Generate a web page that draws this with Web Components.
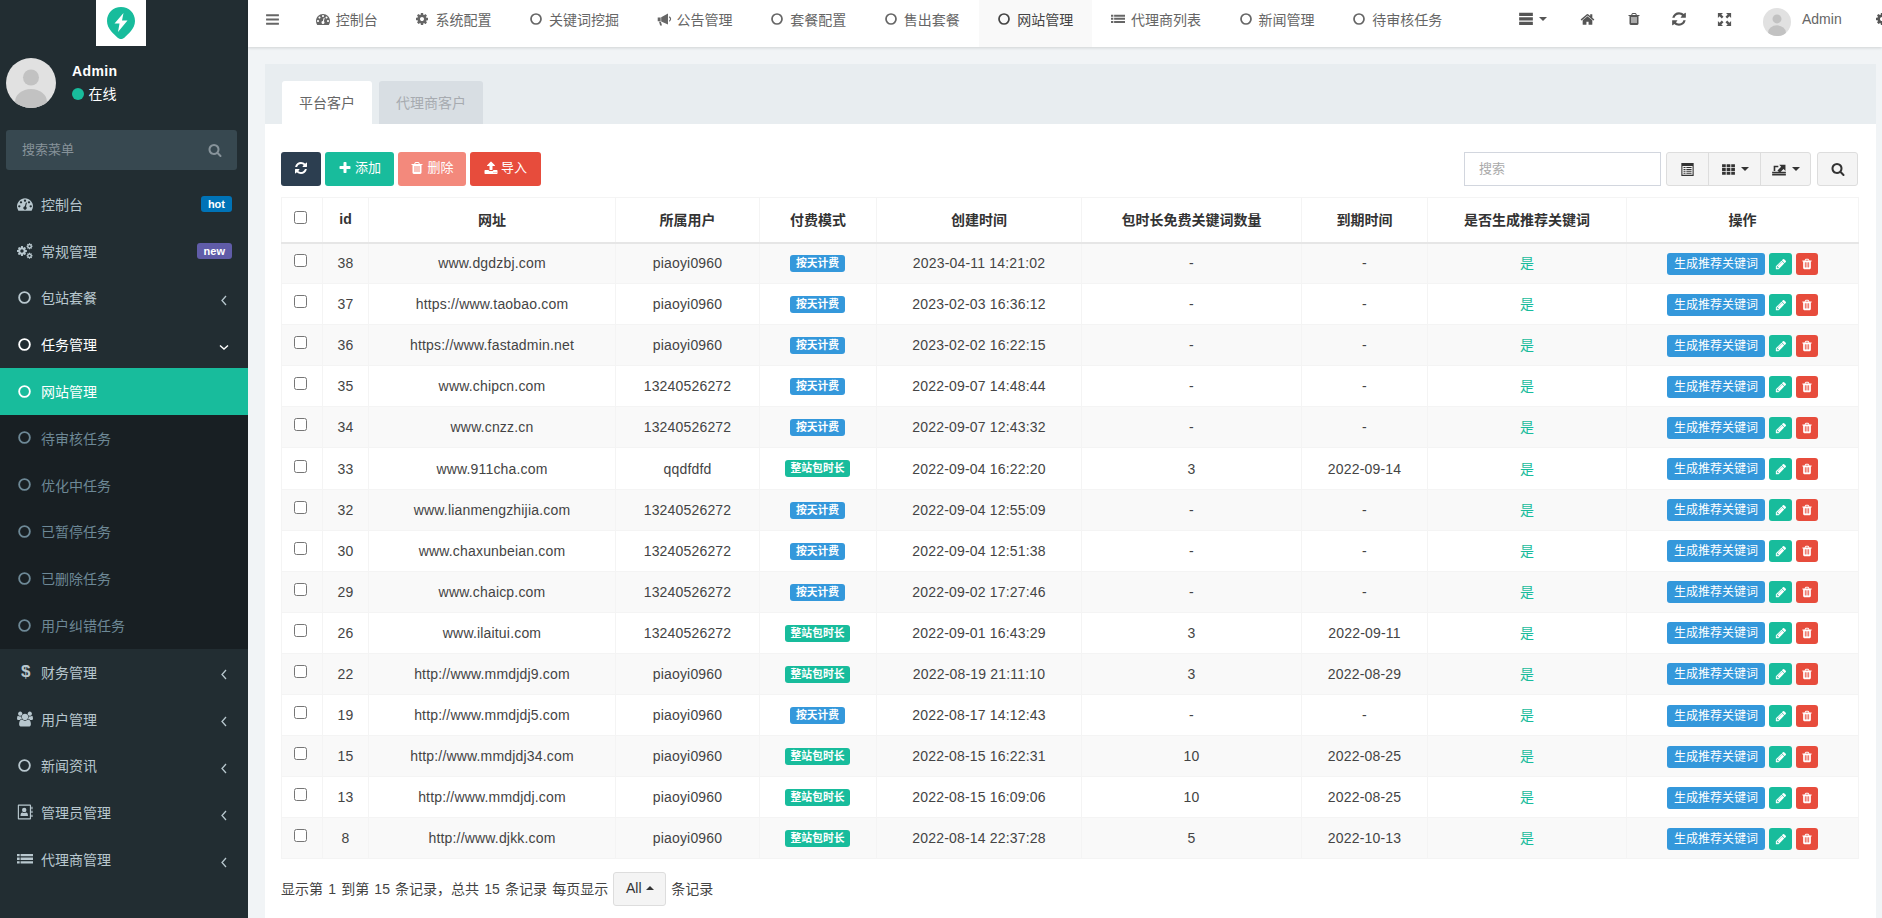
<!DOCTYPE html>
<html lang="zh">
<head>
<meta charset="utf-8">
<title>网站管理</title>
<style>
  html, body { margin: 0; height: 100%; overflow: hidden; }
  body { font: 14px "Liberation Sans", "Noto Sans CJK SC", sans-serif; color: #444; background: #f1f4f6; }
</style>
</head>
<body>
<admin-shell>
  <admin-sidebar slot="side">
    <side-item icon="dashboard" badge="hot" badge-color="#0073b7">控制台</side-item>
    <side-item icon="cogs" badge="new" badge-color="#605ca8">常规管理</side-item>
    <side-item icon="circle" arrow="left">包站套餐</side-item>
    <side-item icon="circle" arrow="down" open>任务管理</side-item>
    <side-sub>
      <side-item icon="circle" sub active>网站管理</side-item>
      <side-item icon="circle" sub>待审核任务</side-item>
      <side-item icon="circle" sub>优化中任务</side-item>
      <side-item icon="circle" sub>已暂停任务</side-item>
      <side-item icon="circle" sub>已删除任务</side-item>
      <side-item icon="circle" sub>用户纠错任务</side-item>
    </side-sub>
    <side-item icon="dollar" arrow="left">财务管理</side-item>
    <side-item icon="users" arrow="left">用户管理</side-item>
    <side-item icon="circle" arrow="left">新闻资讯</side-item>
    <side-item icon="contact" arrow="left">管理员管理</side-item>
    <side-item icon="list" arrow="left">代理商管理</side-item>
  </admin-sidebar>
  <top-bar slot="top">
    <top-item icon="dashboard">控制台</top-item>
    <top-item icon="cog">系统配置</top-item>
    <top-item icon="circle">关键词挖掘</top-item>
    <top-item icon="bullhorn" size="16">公告管理</top-item>
    <top-item icon="circle">套餐配置</top-item>
    <top-item icon="circle">售出套餐</top-item>
    <top-item icon="circle" active>网站管理</top-item>
    <top-item icon="list">代理商列表</top-item>
    <top-item icon="circle">新闻管理</top-item>
    <top-item icon="circle">待审核任务</top-item>
  </top-bar>
  <tab-panel>
    <tool-bar></tool-bar>
    <customer-table></customer-table>
    <table-footer></table-footer>
  </tab-panel>
</admin-shell>

<script>
const ICONS = {
  bars: "M1664 1344v128q0 26-19 45t-45 19H192q-26 0-45-19t-19-45v-128q0-26 19-45t45-19h1408q26 0 45 19t19 45zm0-512v128q0 26-19 45t-45 19H192q-26 0-45-19t-19-45V832q0-26 19-45t45-19h1408q26 0 45 19t19 45zm0-512v128q0 26-19 45t-45 19H192q-26 0-45-19t-19-45V320q0-26 19-45t45-19h1408q26 0 45 19t19 45z",
  search: "M1216 832q0-185-131.5-316.5T768 384 451.5 515.5 320 832t131.5 316.5T768 1280t316.5-131.5T1216 832zm512 832q0 52-38 90t-90 38q-54 0-90-38l-343-342q-179 124-399 124-143 0-273.5-55.5t-225-150-150-225T64 832t55.5-273.5 150-225 225-150T768 128t273.5 55.5 225 150 150 225T1472 832q0 220-124 399l343 343q37 37 37 90z",
  plus: "M1600 736v192q0 40-28 68t-68 28h-416v416q0 40-28 68t-68 28H800q-40 0-68-28t-28-68v-416H288q-40 0-68-28t-28-68V736q0-40 28-68t68-28h416V224q0-40 28-68t68-28h192q40 0 68 28t28 68v416h416q40 0 68 28t28 68z",
  refresh: "M1639 1056q0 5-1 7-64 268-268 434.5T892 1664q-146 0-282.5-55T366 1452l-129 129q-19 19-45 19t-45-19-19-45v-448q0-26 19-45t45-19h448q26 0 45 19t19 45-19 45l-137 137q71 66 161 102t187 36q134 0 250-65t186-179q11-17 53-117 8-23 30-23h192q13 0 22.5 9.5t9.5 22.5zm25-800v448q0 26-19 45t-45 19h-448q-26 0-45-19t-19-45 19-45l138-138q-148-137-349-137-134 0-250 65T460 628q-11 17-53 117-8 23-30 23H178q-13 0-22.5-9.5T146 736v-7q65-268 270-434.5T896 128q146 0 284 55.5T1425 340l130-129q19-19 45-19t45 19 19 45z",
  dashboard: "M384 1152q0-53-37.5-90.5T256 1024t-90.5 37.5T128 1152t37.5 90.5T256 1280t90.5-37.5T384 1152zm192-448q0-53-37.5-90.5T448 576t-90.5 37.5T320 704t37.5 90.5T448 832t90.5-37.5T576 704zm428 481l101-382q6-26-7.5-48.5T1059 725t-48 6.5-30 39.5l-101 382q-60 5-107 43.5t-63 98.5q-20 77 20 146t117 89 146-20 89-117q16-60-6-117t-72-91zm660-33q0-53-37.5-90.5T1536 1024t-90.5 37.5T1408 1152t37.5 90.5 90.5 37.5 90.5-37.5 37.5-90.5zm-640-640q0-53-37.5-90.5T896 384t-90.5 37.5T768 512t37.5 90.5T896 640t90.5-37.5T1024 512zm448 192q0-53-37.5-90.5T1344 576t-90.5 37.5T1216 704t37.5 90.5T1344 832t90.5-37.5T1472 704zm320 448q0 261-141 483-19 29-54 29H195q-35 0-54-29Q0 1414 0 1152q0-182 71-348t191-286 286-191 348-71 348 71 286 191 191 286 71 348z",
  home: "M1472 992v480q0 26-19 45t-45 19h-384v-384H768v384H384q-26 0-45-19t-19-45V992q0-1 .5-3t.5-3l575-474 575 474q1 2 1 6zm223-69l-62 74q-8 9-21 11h-3q-13 0-21-7L896 424l-692 577q-12 8-24 7-13-2-21-11l-62-74q-8-10-7-23.5t11-21.5l719-599q32-26 76-26t76 26l244 204V288q0-14 9-23t23-9h192q14 0 23 9t9 23v408l219 182q10 8 11 21.5t-7 23.5z",
  trash: "M704 1376V672q0-14-9-23t-23-9h-64q-14 0-23 9t-9 23v704q0 14 9 23t23 9h64q14 0 23-9t9-23zm256 0V672q0-14-9-23t-23-9h-64q-14 0-23 9t-9 23v704q0 14 9 23t23 9h64q14 0 23-9t9-23zm256 0V672q0-14-9-23t-23-9h-64q-14 0-23 9t-9 23v704q0 14 9 23t23 9h64q14 0 23-9t9-23zM672 384h448l-48-117q-7-9-17-11H738q-10 2-17 11zm928 32v64q0 14-9 23t-23 9h-96v948q0 83-47 143.5t-113 60.5H480q-66 0-113-58.5T320 1464V512h-96q-14 0-23-9t-9-23v-64q0-14 9-23t23-9h309l70-167q15-37 54-63t79-26h320q40 0 79 26t54 63l70 167h309q14 0 23 9t9 23z",
  pencil: "M491 1536l91-91-235-235-91 91v107h128v128h107zm523-928q0-22-22-22-10 0-17 7L433 1135q-7 7-7 17 0 22 22 22 10 0 17-7l542-542q7-7 7-17zm-54-192l416 416-832 832H128v-416zm683 96q0 53-37 90l-166 166-416-416 166-165q36-38 90-38 53 0 91 38l235 234q37 39 37 91z",
  upload: "M1344 1472q0-26-19-45t-45-19-45 19-19 45 19 45 45 19 45-19 19-45zm256 0q0-26-19-45t-45-19-45 19-19 45 19 45 45 19 45-19 19-45zm128-224v320q0 40-28 68t-68 28H160q-40 0-68-28t-28-68v-320q0-40 28-68t68-28h427q21 56 70.5 92t110.5 36h256q61 0 110.5-36t70.5-92h427q40 0 68 28t28 68zm-325-648q-17 40-59 40h-256v448q0 26-19 45t-45 19H768q-26 0-45-19t-19-45V640H448q-42 0-59-40-17-39 14-69l448-448q18-19 45-19t45 19l448 448q31 30 14 69z",
  cog: "M1152 896q0-106-75-181t-181-75-181 75-75 181 75 181 181 75 181-75 75-181zm512-109v222q0 12-8 23t-20 13l-185 28q-19 54-39 91 35 50 107 138 10 12 10 25t-9 23q-27 37-99 108t-94 71q-12 0-26-9l-138-108q-44 23-91 38-16 136-29 186-7 28-36 28H785q-14 0-24.5-8.5T749 1634l-28-184q-49-16-90-37l-141 107q-10 9-25 9-14 0-25-11-126-114-165-168-7-10-7-23 0-12 8-23 15-21 51-66.5t54-70.5q-27-50-41-99l-183-27q-13-2-21-12.5T128 1004V782q0-12 8-23t19-13l186-28q14-46 39-92-40-57-107-138-10-12-10-24 0-10 9-23 26-36 98.5-107.5T465 262q13 0 26 10l138 107q44-23 91-38 16-136 29-186 7-28 36-28h222q14 0 24.5 8.5T1043 158l28 184q49 16 90 37l142-107q9-9 24-9 13 0 25 10 129 119 165 170 7 8 7 22 0 12-8 23-15 21-51 66.5t-54 70.5q26 50 41 98l183 28q13 2 21 12.5t8 23.5z",
  users: "M593 896q-162 5-265 128H194q-82 0-138-40.5T0 865q0-353 124-353 6 0 43.5 21t97.5 42.5T384 597q67 0 133-23-5 37-5 66 0 139 81 256zm1071 637q0 120-73 189.5t-194 69.5H523q-121 0-194-69.5T256 1533q0-53 3.5-103.5t14-109T300 1212t43-97.5 62-81 85.5-53.5T602 960q10 0 43 21.5t73 48 107 48 135 21.5 135-21.5 107-48 73-48 43-21.5q61 0 111.5 20t85.5 53.5 62 81 43 97.5 26.5 108.5 14 109 3.5 103.5zM640 256q0 106-75 181t-181 75-181-75-75-181 75-181T384 0t181 75 75 181zm704 384q0 159-112.5 271.5T960 1024 688.5 911.5 576 640t112.5-271.5T960 256t271.5 112.5T1344 640zm576 225q0 78-56 118.5t-138 40.5h-134q-103-123-265-128 81-117 81-256 0-29-5-66 66 23 133 23 59 0 119-21.5t97.5-42.5 43.5-21q124 0 124 353zm-128-609q0 106-75 181t-181 75-181-75-75-181 75-181 181-75 181 75 75 181z"
};

// icons that are not a single path
const SHAPES = {
  circle: `<circle cx="896" cy="896" r="640" fill="none" stroke="currentColor" stroke-width="220"/>`,
  list: `<path d="M0 240h300v260H0zM400 240h1392v260H400zM0 640h300v260H0zM400 640h1392v260H400zM0 1040h300v260H0zM400 1040h1392v260H400z" transform="translate(0 100)"/>`,
  stack: `<path d="M128 190h1536v380H128zM128 690h1536v380H128zM128 1190h1536v380H128z"/>`,
  th: `<path d="M128 256h440v360H128zM676 256h440v360H676zM1224 256h440v360h-440zM128 716h440v360H128zM676 716h440v360H676zM1224 716h440v360h-440zM128 1176h440v360H128zM676 1176h440v360H676zM1224 1176h440v360h-440z"/>`,
  cogs: `<g transform="translate(-90 250) scale(.72)"><path d="${ICONS.cog}"/></g><g transform="translate(1010 -30) scale(.44)"><path d="${ICONS.cog}"/></g><g transform="translate(1010 1030) scale(.44)"><path d="${ICONS.cog}"/></g>`,
  contact: `<path fill-rule="evenodd" d="M180 60h1300q90 0 90 90v1490q0 90-90 90H180q-90 0-90-90V150q0-90 90-90zm40 130v1410h1220V190zM1610 320h130v260h-130zM1610 760h130v260h-130zM1610 1200h130v260h-130z"/><circle cx="810" cy="680" r="250"/><path d="M390 1340q0-380 230-380 90 60 190 60t190-60q230 0 230 380z"/>`,
  bullhorn: `<path d="M80 720h330v440H80zM470 700l760-430v1240L470 1180zM230 1190h210l120 440H350z"/><path fill="none" stroke="currentColor" stroke-width="130" d="M1370 650q300 240 0 500"/>`,
  expand: `<path d="M200 200h540L560 380l230 230-180 180-230-230-180 180zM1592 200v540l-180-180-230 230-180-180 230-230-180-180zM200 1592v-540l180 180 230-230 180 180-230 230 180 180zM1592 1592h-540l180-180-230-230 180-180 230 230 180-180z"/>`,
  table: `<path fill-rule="evenodd" d="M160 128h1472v1536H160zm130 340v1066h1212V468zM420 600h240v130H420zM760 600h620v130H760zM420 850h240v130H420zM760 850h620v130H760zM420 1100h240v130H420zM760 1100h620v130H760zM420 1300h240v110H420zM760 1300h620v110H760z"/>`,
  export: `<path d="M128 1190h1536v180H128zM128 1440h1536v180H128z"/><path d="M720 1060l420-420-220-220h700v700l-220-220-420 420z"/><path d="M300 1130V520h520v170H480v440z"/>`
};

class FaIcon extends HTMLElement {
  constructor() {
    super();
    this.attachShadow({ mode: "open" });
  }

  connectedCallback() {
    const name = this.getAttribute("name");
    const size = this.getAttribute("size") || 14;
    const view = name === "users" ? "0 0 1920 1792" : "0 0 1792 1792";
    const body = SHAPES[name] || `<path d="${ICONS[name]}"/>`;
    this.shadowRoot.innerHTML = `
      <style>
        :host { display: inline-flex; align-items: center; justify-content: center; line-height: 0; }
        svg { width: ${size}px; height: ${size}px; fill: currentColor; display: block; }
      </style>
      <svg viewBox="${view}" aria-hidden="true">${body}</svg>
    `;
  }
}
customElements.define("fa-icon", FaIcon);

class AdminShell extends HTMLElement {
  constructor() {
    super();
    this.attachShadow({ mode: "open" }).innerHTML = `
      <style>
        :host { display: grid; grid-template-columns: 248px 1fr; height: 918px; overflow: hidden; }
        .main { display: flex; flex-direction: column; min-width: 0; background: #f1f4f6; }
        .content { flex: 1; padding: 17px 6px 0 17px; min-height: 0; display: flex; }
      </style>
      <slot name="side"></slot>
      <div class="main">
        <slot name="top"></slot>
        <div class="content"><slot></slot></div>
      </div>
    `;
  }
}
customElements.define("admin-shell", AdminShell);

class AdminSidebar extends HTMLElement {
  constructor() {
    super();
    this.attachShadow({ mode: "open" }).innerHTML = `
      <style>
        :host { display: block; background: #222d32; height: 918px; overflow: hidden; color: #fff; }
        .logo { width: 50px; height: 46px; margin: 0 auto; background: #fff; display: flex; align-items: center; justify-content: center; transform: translateX(-3px); }
        .user { display: flex; padding: 12px 6px 0; gap: 16px; height: 72px; }
        .user svg { width: 50px; height: 50px; display: block; }
        .info { padding-top: 5px; font-size: 14px; }
        .name { font-weight: 700; line-height: 16px; letter-spacing: .4px; }
        .state { display: flex; align-items: center; gap: 4.500px; margin-top: 7px; line-height: 16px; }
        .dot { width: 12px; height: 12px; border-radius: 50%; background: #18bc9c; }
        .search { margin: 0 11px 11px 6px; height: 40px; box-sizing: border-box; background: #374850; border-radius: 3px; display: flex; align-items: center; justify-content: space-between; padding: 0 15px 0 16px; color: #87939a; font-size: 13px; }
        .search span { padding-bottom: 3px; }
      </style>
      <div class="logo">
        <svg width="30" height="32" viewBox="0 0 30 32">
          <path fill="#18bc9c" d="M15 0c8 0 14 6 14 14 0 8-7 13-11 17-2 1.500-4 1.500-6 0C8 27 1 22 1 14 1 6 7 0 15 0z"/>
          <path fill="#fff" d="M17.500 6 8.500 16.500h5L12 25l9.500-11.500h-5.500z"/>
        </svg>
      </div>
      <div class="user">
        <svg viewBox="0 0 50 50"><clipPath id="c"><circle cx="25" cy="25" r="25"/></clipPath><g clip-path="url(#c)"><rect width="50" height="50" fill="#e1e1e1"/><circle cx="25" cy="19.500" r="8" fill="#c2c2c2"/><ellipse cx="25" cy="44" rx="16" ry="13" fill="#c2c2c2"/></g></svg>
        <div class="info">
          <div class="name">Admin</div>
          <div class="state"><span class="dot"></span>在线</div>
        </div>
      </div>
      <div class="search"><span>搜索菜单</span><fa-icon name="search" size="14"></fa-icon></div>
      <slot></slot>
    `;
  }
}
customElements.define("admin-sidebar", AdminSidebar);

class SideSub extends HTMLElement {
  constructor() {
    super();
    this.attachShadow({ mode: "open" }).innerHTML = `
      <style>:host { display: block; background: #181f23; }</style>
      <slot></slot>
    `;
  }
}
customElements.define("side-sub", SideSub);

class SideItem extends HTMLElement {
  constructor() {
    super();
    this.attachShadow({ mode: "open" });
  }

  connectedCallback() {
    const icon = this.getAttribute("icon");
    const badge = this.getAttribute("badge");
    const arrow = this.getAttribute("arrow");
    const chevron = arrow === "down"
      ? `<svg class="arrow" width="12" height="12" viewBox="0 0 12 12"><path d="M2 4.500 6 8l4-3.500" fill="none" stroke="currentColor" stroke-width="1.400"/></svg>`
      : `<svg class="arrow" width="12" height="12" viewBox="0 0 12 12"><path d="M8 2 4 6.500 8 11" fill="none" stroke="currentColor" stroke-width="1.300"/></svg>`;
    const glyph = icon === "dollar"
      ? `<b class="dollar">$</b>`
      : `<fa-icon name="${icon}" size="${icon === "circle" ? 15 : 16}"></fa-icon>`;
    this.shadowRoot.innerHTML = `
      <style>
        :host { display: flex; align-items: center; height: 46.8px; padding: 0 15px 0 17px; color: #b8c7ce; font-size: 14px; }
        :host([open]) { color: #fff; }
        :host([sub]) { color: #6d8896; }
        :host([active]) { color: #fff; background: #18bc9c; }
        .icon { width: 24px; flex: none; display: flex; align-items: center; padding-bottom: 1px; }
        .dollar { font-size: 17px; padding-left: 4px; line-height: 17px; }
        .label { flex: 1; padding-bottom: 1px; }
        .badge { background: ${this.getAttribute("badge-color")}; color: #fff; font: 700 11px "Liberation Sans", sans-serif; line-height: 16px; height: 16px; padding: 0 7px; border-radius: 3px; margin-right: 1px; }
        .arrow { margin-top: 4px; margin-right: 3px; }
      </style>
      <span class="icon">${glyph}</span>
      <span class="label"><slot></slot></span>
      ${badge ? `<span class="badge">${badge}</span>` : ""}
      ${arrow ? chevron : ""}
    `;
  }
}
customElements.define("side-item", SideItem);

class TopBar extends HTMLElement {
  constructor() {
    super();
    this.attachShadow({ mode: "open" }).innerHTML = `
      <style>
        :host { display: flex; height: 47px; flex: none; background: #fff; box-shadow: 0 1px 3px rgba(0,0,0,.14); color: #666; position: relative; overflow: hidden; }
        .toggle { width: 49px; flex: none; display: flex; align-items: center; padding: 0 0 9px 17px; box-sizing: border-box; }
        .items { display: flex; flex: none; width: 1208px; }
        .tools { display: flex; align-items: center; flex: none; color: #555; padding-bottom: 9px; box-sizing: border-box; height: 47px; }
        .tool { display: flex; align-items: center; }
        .caret { width: 0; height: 0; border: 4px solid transparent; border-top-color: currentColor; border-bottom: 0; margin-left: 5px; }
        .user { display: flex; align-items: center; gap: 11px; margin-left: 30px; color: #666; }
        .user svg { width: 28px; height: 28px; display: block; margin-top: 5px; }
      </style>
      <div class="toggle"><fa-icon name="bars" size="15"></fa-icon></div>
      <div class="items"><slot></slot></div>
      <div class="tools">
        <span class="tool" style="width:62px;margin-left:13px"><fa-icon name="stack" size="16"></fa-icon><i class="caret"></i></span>
        <span class="tool" style="width:47px"><fa-icon name="home" size="15"></fa-icon></span>
        <span class="tool" style="width:44px"><fa-icon name="trash" size="14"></fa-icon></span>
        <span class="tool" style="width:45px"><fa-icon name="refresh" size="16"></fa-icon></span>
        <span class="tool" style="width:17px"><fa-icon name="expand" size="17"></fa-icon></span>
        <span class="user">
          <svg viewBox="0 0 50 50"><clipPath id="t"><circle cx="25" cy="25" r="25"/></clipPath><g clip-path="url(#t)"><rect width="50" height="50" fill="#e1e1e1"/><circle cx="25" cy="19.500" r="8" fill="#c2c2c2"/><ellipse cx="25" cy="44" rx="16" ry="13" fill="#c2c2c2"/></g></svg>
          Admin
        </span>
        <span class="tool" style="margin-left:33px"><fa-icon name="cog" size="14"></fa-icon></span>
      </div>
    `;
  }
}
customElements.define("top-bar", TopBar);

class TopItem extends HTMLElement {
  constructor() {
    super();
    this.attachShadow({ mode: "open" });
  }

  connectedCallback() {
    this.shadowRoot.innerHTML = `
      <style>
        :host { display: flex; align-items: center; padding: 0 18.800px 9px; font-size: 14px; color: #666; }
        :host([active]) { background: #f9f9f9; color: #444; }
        .icon { width: 20px; flex: none; display: flex; align-items: center; }
      </style>
      <span class="icon"><fa-icon name="${this.getAttribute("icon")}" size="${this.getAttribute("size") || 14}"></fa-icon></span>
      <slot></slot>
    `;
  }
}
customElements.define("top-item", TopItem);

class TabPanel extends HTMLElement {
  constructor() {
    super();
    this.attachShadow({ mode: "open" }).innerHTML = `
      <style>
        :host { display: block; flex: 1; min-width: 0; background: #fff; border-radius: 3px 3px 0 0; }
        .head { height: 60px; box-sizing: border-box; padding: 17px 0 0 17px; background: #e8edf0; display: flex; gap: 7px; font-size: 14px; }
        .tab { height: 43px; box-sizing: border-box; padding: 0 17px 2px; display: flex; align-items: center; border-radius: 3px 3px 0 0; }
        .on { background: #fff; color: #666; }
        .off { background: #d8dee3; color: #a7abb0; }
        .body { padding: 28px 18px 0 16px; }
      </style>
      <div class="head"><span class="tab on">平台客户</span><span class="tab off">代理商客户</span></div>
      <div class="body"><slot></slot></div>
    `;
  }
}
customElements.define("tab-panel", TabPanel);

class ToolBar extends HTMLElement {
  constructor() {
    super();
    this.attachShadow({ mode: "open" }).innerHTML = `
      <style>
        :host { display: flex; justify-content: space-between; height: 34px; margin-bottom: 11px; font-size: 14px; }
        .left, .right { display: flex; }
        .btn { height: 34px; box-sizing: border-box; border-radius: 3px; color: #fff; display: flex; align-items: center; justify-content: center; gap: 3px; margin-right: 4px; font-size: 13px; }
        .btn fa-icon { margin-bottom: 2px; }
        .btn span { padding-bottom: 5px; }
        .input { width: 197px; height: 34px; box-sizing: border-box; border: 1px solid #d2d6de; padding: 0 14px 4px; color: #aaa; display: flex; align-items: center; margin-right: 5px; font-size: 13px; }
        .group { display: flex; height: 34px; box-sizing: border-box; background: #f4f4f4; border: 1px solid #ddd; border-radius: 3px; color: #333; }
        .cell { display: flex; align-items: center; justify-content: center; box-sizing: border-box; border-left: 1px solid #ddd; }
        .cell:first-child { border-left: 0; }
        .caret { width: 0; height: 0; border: 4px solid transparent; border-top-color: currentColor; border-bottom: 0; margin-left: 5px; }
      </style>
      <div class="left">
        <div class="btn" style="width:40px;background:#2c3e50"><fa-icon name="refresh" size="14"></fa-icon></div>
        <div class="btn" style="width:69px;background:#18bc9c"><fa-icon name="plus" size="14"></fa-icon><span>添加</span></div>
        <div class="btn" style="width:68px;background:#f3897c"><fa-icon name="trash" size="14"></fa-icon><span>删除</span></div>
        <div class="btn" style="width:71px;background:#e74c3c;margin:0"><fa-icon name="upload" size="14"></fa-icon><span>导入</span></div>
      </div>
      <div class="right">
        <span class="input">搜索</span>
        <span class="group" style="width:145px;margin-right:6px">
          <span class="cell" style="width:41px"><fa-icon name="table" size="15"></fa-icon></span>
          <span class="cell" style="width:52px"><fa-icon name="th" size="15"></fa-icon><i class="caret"></i></span>
          <span class="cell" style="width:50px"><fa-icon name="export" size="16"></fa-icon><i class="caret"></i></span>
        </span>
        <span class="group" style="width:41px;justify-content:center;align-items:center"><fa-icon name="search" size="14"></fa-icon></span>
      </div>
    `;
  }
}
customElements.define("tool-bar", ToolBar);

const ROWS = [
  [38, "www.dgdzbj.com", "piaoyi0960", 0, "2023-04-11 14:21:02", "-", "-"],
  [37, "https://www.taobao.com", "piaoyi0960", 0, "2023-02-03 16:36:12", "-", "-"],
  [36, "https://www.fastadmin.net", "piaoyi0960", 0, "2023-02-02 16:22:15", "-", "-"],
  [35, "www.chipcn.com", "13240526272", 0, "2022-09-07 14:48:44", "-", "-"],
  [34, "www.cnzz.cn", "13240526272", 0, "2022-09-07 12:43:32", "-", "-"],
  [33, "www.911cha.com", "qqdfdfd", 1, "2022-09-04 16:22:20", "3", "2022-09-14"],
  [32, "www.lianmengzhijia.com", "13240526272", 0, "2022-09-04 12:55:09", "-", "-"],
  [30, "www.chaxunbeian.com", "13240526272", 0, "2022-09-04 12:51:38", "-", "-"],
  [29, "www.chaicp.com", "13240526272", 0, "2022-09-02 17:27:46", "-", "-"],
  [26, "www.ilaitui.com", "13240526272", 1, "2022-09-01 16:43:29", "3", "2022-09-11"],
  [22, "http://www.mmdjdj9.com", "piaoyi0960", 1, "2022-08-19 21:11:10", "3", "2022-08-29"],
  [19, "http://www.mmdjdj5.com", "piaoyi0960", 0, "2022-08-17 14:12:43", "-", "-"],
  [15, "http://www.mmdjdj34.com", "piaoyi0960", 1, "2022-08-15 16:22:31", "10", "2022-08-25"],
  [13, "http://www.mmdjdj.com", "piaoyi0960", 1, "2022-08-15 16:09:06", "10", "2022-08-25"],
  [8, "http://www.djkk.com", "piaoyi0960", 1, "2022-08-14 22:37:28", "5", "2022-10-13"]
];

class CustomerTable extends HTMLElement {
  constructor() {
    super();
    this.attachShadow({ mode: "open" });
  }

  connectedCallback() {
    const widths = [41, 46, 247, 144, 117, 205, 220, 126, 199, 232];
    const heads = ["", "id", "网址", "所属用户", "付费模式", "创建时间", "包时长免费关键词数量", "到期时间", "是否生成推荐关键词", "操作"];
    const body = ROWS.map(r => `
      <tr>
        <td><input type="checkbox"></td>
        <td>${r[0]}</td>
        <td>${r[1]}</td>
        <td>${r[2]}</td>
        <td>${r[3] ? `<span class="label green">整站包时长</span>` : `<span class="label blue">按天计费</span>`}</td>
        <td>${r[4]}</td>
        <td>${r[5]}</td>
        <td>${r[6]}</td>
        <td class="yes">是</td>
        <td><div class="ops">
          <span class="op blue">生成推荐关键词</span>
          <span class="op green sq"><fa-icon name="pencil" size="12"></fa-icon></span>
          <span class="op red sq" style="width:22px"><fa-icon name="trash" size="12"></fa-icon></span>
        </div></td>
      </tr>`).join("");
    this.shadowRoot.innerHTML = `
      <style>
        :host { display: block; font-size: 14px; color: #444; }
        table { border-collapse: collapse; table-layout: fixed; width: 1577px; }
        th, td { border: 1px solid #f4f4f4; text-align: center; padding: 0; box-sizing: border-box; }
        th { height: 45px; padding-bottom: 2px; border-bottom: 2px solid #e6e6e6; color: #333; font-weight: 700; }
        td { height: 41.100px; letter-spacing: .18px; }
        tbody tr:nth-child(odd) { background: #f9f9f9; }
        input { margin: 0 3px 0 0; width: 13px; height: 13px; position: relative; top: -1px; }
        th input { top: 0; }
        .label { display: inline-block; height: 17px; line-height: 17px; padding: 0 6px; border-radius: 3px; color: #fff; font-size: 10.800px; font-weight: 700; vertical-align: middle; letter-spacing: 0; margin-right: 1px; }
        .green { background: #18bc9c; }
        .blue { background: #3498db; }
        .red { background: #e74c3c; }
        .yes { color: #18bc9c; padding-bottom: 2px; }
        .ops { display: flex; justify-content: flex-start; padding: 1px 0 0 40px; gap: 4px; letter-spacing: 0; }
        .op { height: 22px; line-height: 22px; padding: 0 7px; border-radius: 3px; color: #fff; font-size: 12px; display: flex; align-items: center; margin: 0; }
        .sq { width: 23px; padding: 0; justify-content: center; box-sizing: border-box; }
      </style>
      <table>
        <colgroup>${widths.map(w => `<col style="width:${w}px">`).join("")}</colgroup>
        <thead><tr>${heads.map((h, i) => `<th>${i ? h : `<input type="checkbox">`}</th>`).join("")}</tr></thead>
        <tbody>${body}</tbody>
      </table>
    `;
  }
}
customElements.define("customer-table", CustomerTable);

class TableFooter extends HTMLElement {
  constructor() {
    super();
    this.attachShadow({ mode: "open" }).innerHTML = `
      <style>
        :host { display: flex; align-items: center; height: 34px; margin-top: 13px; font-size: 14px; color: #444; }
        .text { word-spacing: 1.300px; padding-bottom: 3px; }
        .tail { padding-bottom: 3px; }
        .size { width: 53px; height: 34px; box-sizing: border-box; margin: 0 5px; padding-bottom: 2px; background: #f4f4f4; border: 1px solid #ddd; border-radius: 3px; display: flex; align-items: center; justify-content: center; gap: 4px; color: #333; font-size: 14px; }
        .up { width: 0; height: 0; border: 4px solid transparent; border-bottom-color: currentColor; border-top: 0; }
      </style>
      <span class="text">显示第 1 到第 15 条记录，总共 15 条记录 每页显示</span>
      <span class="size">All<i class="up"></i></span>
      <span class="tail">条记录</span>
    `;
  }
}
customElements.define("table-footer", TableFooter);
</script>
</body>
</html>
